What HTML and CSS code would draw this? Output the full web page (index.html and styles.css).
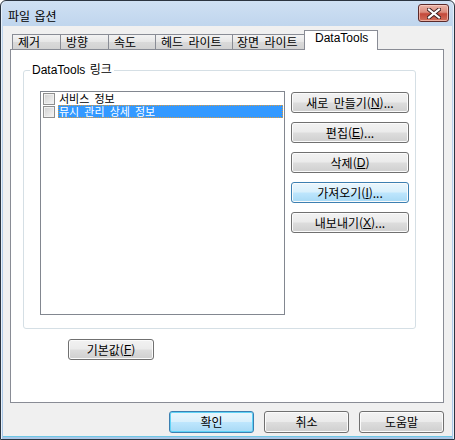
FILE: index.html
```html
<!DOCTYPE html>
<html lang="ko">
<head>
<meta charset="utf-8">
<title>파일 옵션</title>
<link rel="stylesheet" href="styles.css">
</head>
<body>
<div class="window">
  <div class="titlebar">
    <span class="title">파일 옵션</span>
    <div class="close">
      <svg width="14" height="11" viewBox="0 0 14 11">
        <path d="M2 1.5 L12 9.5 M12 1.5 L2 9.5" stroke="#3a1d1d" stroke-width="4" stroke-linecap="square"/>
        <path d="M2 1.5 L12 9.5 M12 1.5 L2 9.5" stroke="#ffffff" stroke-width="2.2" stroke-linecap="square"/>
      </svg>
    </div>
  </div>
  <div class="client">
    <div class="tabs">
      <div class="tab t1">제거</div>
      <div class="tab t2">방향</div>
      <div class="tab t3">속도</div>
      <div class="tab t4">헤드 라이트</div>
      <div class="tab t5">장면 라이트</div>
      <div class="tab active">DataTools</div>
    </div>
    <div class="panel">
      <div class="group">
        <span class="legend">DataTools 링크</span>
        <div class="listbox">
          <div class="item"><span class="check"></span><span class="label">서비스 정보</span></div>
          <div class="item"><span class="check"></span><span class="label selected">뮤시 관리 상세 정보</span></div>
        </div>
        <div class="side">
          <div class="btn side-btn">새로 만들기(<u>N</u>)...</div>
          <div class="btn side-btn">편집(<u>E</u>)...</div>
          <div class="btn side-btn">삭제(<u>D</u>)</div>
          <div class="btn side-btn hot">가져오기(<u>I</u>)...</div>
          <div class="btn side-btn">내보내기(<u>X</u>)...</div>
        </div>
      </div>
      <div class="btn default-btn">기본값(<u>F</u>)</div>
    </div>
    <div class="footer">
      <div class="btn foot-btn primary">확인</div>
      <div class="btn foot-btn">취소</div>
      <div class="btn foot-btn">도움말</div>
    </div>
  </div>
</div>
</body>
</html>
```
FILE: styles.css
```css
* { box-sizing: border-box; }
html, body { margin: 0; padding: 0; background: #ffffff; }
body {
  font-family: "Liberation Sans", "Noto Sans CJK KR", sans-serif;
  font-size: 12px;
  color: #000;
}
.window {
  width: 455px;
  height: 440px;
  border: 1px solid #2b3440;
  border-radius: 6px 6px 0 0;
  background: linear-gradient(#cfe0f3 0px, #bfd5ed 26px, #a9c6e6 100%);
  padding: 0 2px 2px 2px;
  display: flex;
  flex-direction: column;
  box-shadow: inset 1px 0 0 #e6f0fa, inset -1px 0 0 #e6f0fa;
}
.titlebar {
  height: 25px;
  display: flex;
  align-items: center;
  justify-content: space-between;
  padding: 0 3px 0 5px;
}
.title {
  font-family: "Noto Sans CJK KR", sans-serif;
  font-size: 12px;
  line-height: 14px;
  margin-top: 4px;
  word-spacing: 1px;
}
.close {
  width: 31px;
  height: 18px;
  margin-top: -1px;
  border: 1px solid #5b2a2a;
  border-radius: 3px;
  background: linear-gradient(#eab4a8 0%, #dc8c7d 45%, #c4493a 55%, #d2705c 100%);
  box-shadow: inset 0 0 0 1px rgba(255,220,210,0.6);
  display: flex;
  align-items: center;
  justify-content: center;
}
.client {
  flex: 1;
  background: #f0f0f0;
  border-bottom: 1px solid #6dc7e6;
  display: flex;
  flex-direction: column;
}
.tabs {
  height: 23px;
  padding: 4px 0 0 9px;
  display: flex;
  align-items: flex-end;
}
.tab {
  height: 15px;
  border: 1px solid #898c95;
  border-bottom: none;
  margin-right: -1px;
  background: linear-gradient(#f3f3f3, #e6e6e6 50%, #dadada 51%, #d2d2d2);
  font-family: "Noto Sans CJK KR", sans-serif;
  line-height: 14px;
  padding-left: 5px;
  word-spacing: 2px;
  white-space: nowrap;
}
.t1 { width: 49px; }
.t2 { width: 49px; }
.t3 { width: 48px; }
.t4 { width: 78px; }
.t5 { width: 75px; padding-left: 4px; }
.tab.active {
  height: 20px;
  width: 74px;
  margin-left: -2px;
  margin-bottom: -1px;
  position: relative;
  z-index: 1;
  background: #ffffff;
  font-family: "Liberation Sans", sans-serif;
  padding-left: 10px;
  line-height: 15px;
}
.panel {
  margin: 0 8px 0 7px;
  height: 354px;
  border: 1px solid #898c95;
  background: #ffffff;
}
.group {
  position: relative;
  margin: 20px 0 0 12px;
  width: 393px;
  height: 259px;
  border: 1px solid #d5dfe5;
  border-radius: 3px;
  padding: 20px 0 0 16px;
  display: flex;
  align-items: flex-start;
}
.legend {
  position: absolute;
  left: 6px;
  top: -8px;
  padding: 0 2px;
  background: #ffffff;
  line-height: 14px;
  word-spacing: 1px;
}
.listbox {
  width: 245px;
  height: 224px;
  border: 1px solid #828790;
  background: #fff;
  padding: 0 0 0 2px;
}
.item {
  height: 13px;
  display: flex;
  align-items: center;
}
.check {
  width: 12px;
  height: 12px;
  flex: none;
  border: 1px solid #8f8f8f;
  background: linear-gradient(135deg, #cfcfcf, #f6f6f6);
  box-shadow: inset 0 0 0 1px #f0f0f0;
  margin-top: 1px;
}
.label {
  margin-left: 3px;
  height: 13px;
  line-height: 13px;
  font-family: "Noto Sans CJK KR", sans-serif;
  font-size: 11px;
  padding-left: 1px;
  word-spacing: 2px;
  white-space: nowrap;
}
.label.selected {
  flex: 1;
  margin-right: 1px;
  background: #3399ff;
  color: #ffffff;
  outline: 1px dotted #e09a3a;
  outline-offset: -1px;
}
.side {
  margin-left: 6px;
  margin-top: 1px;
  display: flex;
  flex-direction: column;
  gap: 9px;
}
.btn {
  border: 1px solid #707070;
  border-radius: 3px;
  background: linear-gradient(#f2f2f2 0%, #ebebeb 48%, #dddddd 52%, #cfcfcf 100%);
  box-shadow: inset 0 0 0 1px #fbfbfb;
  display: flex;
  align-items: center;
  justify-content: center;
  font-family: "Noto Sans CJK KR", sans-serif;
  font-size: 12px;
  line-height: 14px;
  white-space: nowrap;
  word-spacing: 2px;
}
.btn u { font-family: "Liberation Sans", sans-serif; }
.side-btn { width: 118px; height: 21px; }
.btn.hot, .btn.primary {
  border-color: #3c7fb1;
  background: linear-gradient(#eaf6fd 0%, #d9f0fc 48%, #bee6fd 52%, #a7d9f5 100%);
}
.btn.primary {
  box-shadow: inset 0 0 0 1px #5fd3f6;
}
.default-btn {
  width: 86px;
  height: 21px;
  margin: 10px 0 0 57px;
}
.footer {
  display: flex;
  justify-content: flex-end;
  gap: 10px;
  padding: 8px 8px 0 0;
}
.foot-btn { width: 85px; height: 22px; }
```
